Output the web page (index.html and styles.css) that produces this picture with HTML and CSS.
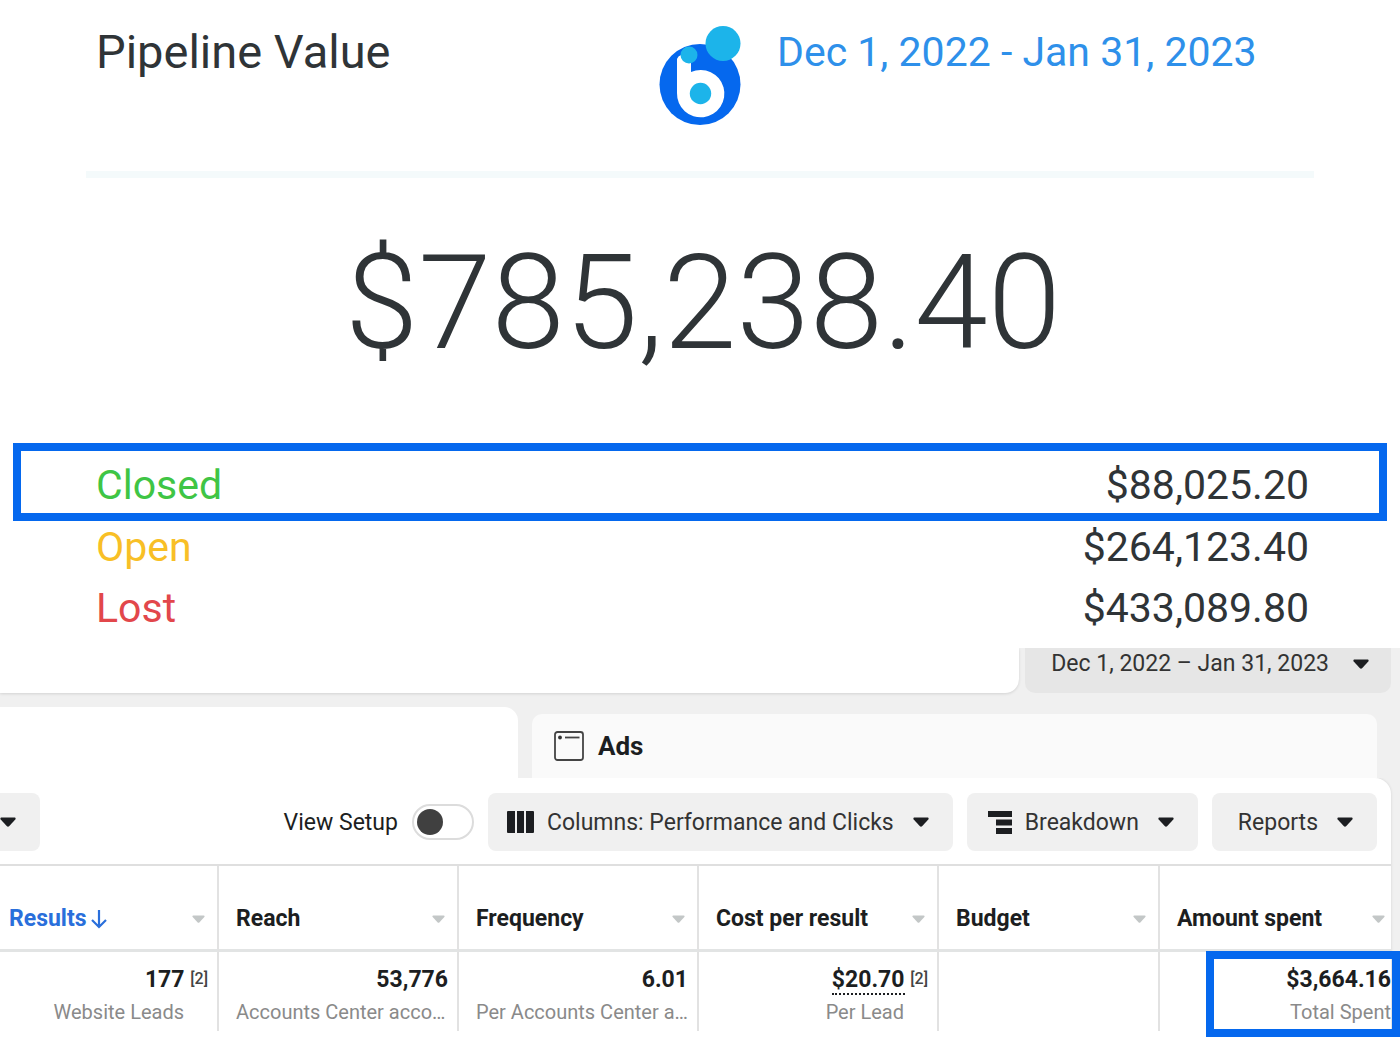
FILE: index.html
```html
<!DOCTYPE html>
<html lang="en">
<head>
    <meta charset="UTF-8">
    <meta name="viewport" content="width=device-width, initial-scale=1.0">
    <title>Pipeline Value</title>
    <link rel="stylesheet" href="styles.css">
</head>
<body>

<!-- Shared caret shape -->
<svg class="sprite" aria-hidden="true">
    <symbol id="caret" viewBox="0 0 16 10">
        <path d="M1.6 0.5h12.8c1.2 0 1.6 1.1 0.9 1.9L9.3 9a1.8 1.8 0 0 1-2.6 0L0.7 2.4C0 1.6 0.4 0.5 1.6 0.5z" fill="currentColor"/>
    </symbol>
</svg>

<section class="pipeline">
    <header class="pipeline-header">
        <h1>Pipeline Value</h1>
        <svg class="logo" viewBox="0 0 82 99" role="img" aria-label="Logo">
            <circle cx="41" cy="58.5" r="40.5" fill="#0568ee"/>
            <circle cx="64" cy="17.5" r="17.5" fill="#1cb4ea"/>
            <path d="M18 33q1-3 4-4h10v17a23.7 23.7 0 1 1-14 21z" fill="#fff"/>
            <circle cx="30" cy="29" r="8.5" fill="#1cb4ea"/>
            <circle cx="41.5" cy="67.5" r="10.7" fill="#1cb4ea"/>
        </svg>
        <a href="#" class="pipeline-date">Dec 1, 2022 - Jan 31, 2023</a>
    </header>

    <p class="total">$785,238.40</p>

    <dl class="breakdown">
        <div class="row closed"><dt>Closed</dt><dd>$88,025.20</dd></div>
        <div class="row open"><dt>Open</dt><dd>$264,123.40</dd></div>
        <div class="row lost"><dt>Lost</dt><dd>$433,089.80</dd></div>
    </dl>
</section>

<section class="ads-manager">
    <div class="topbar">
        <div class="topbar-search"></div>
        <button type="button" class="date-btn">Dec 1, 2022 – Jan 31, 2023 <svg class="caret"><use href="#caret"/></svg></button>
    </div>

    <div class="tabs">
        <div class="tab active"></div>
        <button type="button" class="tab tab-ads">
            <svg class="tab-icon" viewBox="0 0 30 30">
                <rect x="1" y="1" width="28" height="28" rx="2.5" fill="none" stroke="#444" stroke-width="1.8"/>
                <circle cx="6" cy="6.5" r="1.9" fill="#333"/>
                <path d="M11 6.5h14.5" stroke="#444" stroke-width="1.8"/>
            </svg>
            Ads
        </button>
    </div>

    <div class="panel">
        <div class="toolbar">
            <button type="button" class="btn btn-cut" aria-label="More"><svg class="caret"><use href="#caret"/></svg></button>
            <label class="setup" for="viewSetup">View Setup</label>
            <input type="checkbox" class="switch" id="viewSetup">
            <button type="button" class="btn">
                <svg class="icon-columns" viewBox="0 0 27 22">
                    <path d="M0 1q0-1 1-1h7v22H1q-1 0-1-1zM10 0h7v22h-7zM19 0h7q1 0 1 1v20q0 1-1 1h-7z" fill="#1c1e21"/>
                </svg>
                Columns: Performance and Clicks
                <svg class="caret"><use href="#caret"/></svg>
            </button>
            <button type="button" class="btn btn-breakdown">
                <svg class="icon-breakdown" viewBox="0 0 24 23">
                    <path d="M0 0h24v6H0zM8 8.5h16v6H8zM8 17h16v6H8z" fill="#1c1e21"/>
                </svg>
                Breakdown
                <svg class="caret"><use href="#caret"/></svg>
            </button>
            <button type="button" class="btn btn-reports">
                Reports
                <svg class="caret"><use href="#caret"/></svg>
            </button>
        </div>

        <table>
            <colgroup>
                <col class="col-results">
                <col class="col-wide">
                <col class="col-wide">
                <col class="col-wide">
                <col class="col-budget">
                <col class="col-amount">
            </colgroup>
            <thead>
                <tr>
                    <th class="sorted"><div class="th-inner">Results
                        <svg class="sort" viewBox="0 0 16 20"><path d="M8 1v17M1 11l7 7 7-7" fill="none" stroke="currentColor" stroke-width="2.2"/></svg>
                        <svg class="caret"><use href="#caret"/></svg></div></th>
                    <th><div class="th-inner">Reach <svg class="caret"><use href="#caret"/></svg></div></th>
                    <th><div class="th-inner">Frequency <svg class="caret"><use href="#caret"/></svg></div></th>
                    <th><div class="th-inner">Cost per result <svg class="caret"><use href="#caret"/></svg></div></th>
                    <th><div class="th-inner">Budget <svg class="caret"><use href="#caret"/></svg></div></th>
                    <th><div class="th-inner">Amount spent <svg class="caret"><use href="#caret"/></svg></div></th>
                </tr>
            </thead>
            <tbody>
                <tr>
                    <td class="noted"><strong>177 <sup>[2]</sup></strong><span class="sub">Website Leads</span></td>
                    <td><strong>53,776</strong><span class="sub long">Accounts Center acco…</span></td>
                    <td><strong>6.01</strong><span class="sub long">Per Accounts Center a…</span></td>
                    <td class="noted"><strong><span class="dotted">$20.70</span> <sup>[2]</sup></strong><span class="sub">Per Lead</span></td>
                    <td></td>
                    <td class="spent"><strong>$3,664.16</strong><span class="sub">Total Spent</span></td>
                </tr>
            </tbody>
        </table>
    </div>
</section>

</body>
</html>
```
FILE: styles.css
```css
/* Global styles */
* {
    margin: 0;
    padding: 0;
    box-sizing: border-box;
}

body {
    background: #fff;
    font-family: Roboto, 'Liberation Sans', sans-serif;
    color: #2f3437;
    overflow-x: hidden;
}

button {
    border: none;
    font-family: inherit;
    cursor: pointer;
}

.sprite {
    display: none;
}

.caret {
    width: 16px;
    height: 10px;
    color: #1c1e21;
    flex-shrink: 0;
}

/* Pipeline */
.pipeline-header {
    display: grid;
    grid-template-columns: 1fr auto 1fr;
    margin: 0 86px;
    padding: 26px 0 46px;
    border-bottom: 7px solid #f4fafb;
    line-height: 52px;
}

.pipeline-header h1 {
    padding-left: 10px;
    font-size: 47px;
    font-weight: 400;
}

.logo {
    width: 82px;
    height: 99px;
}

.pipeline-date {
    padding-left: 36px;
    font-size: 41px;
    color: #2e90ea;
    text-decoration: none;
    white-space: nowrap;
}

.total {
    padding: 45px 0 60px 6px;
    font-size: 132px;
    font-weight: 300;
    line-height: 160px;
    text-align: center;
}

.breakdown {
    padding: 0 13px 14px;
    font-size: 41px;
    line-height: 52px;
}

.row {
    display: flex;
    justify-content: space-between;
    padding: 0 78px 0 83px;
}

.closed {
    padding: 8px 70px 2px 75px;
    border: 8px solid #0568ee;
}

.lost {
    margin-top: 9px;
}

.closed dt {
    color: #3fc545;
}

.open dt {
    color: #f8bf26;
}

.lost dt {
    color: #e2474b;
}

/* Ads manager */
.ads-manager {
    background: #f0f0f0;
    color: #1c1e21;
    font-size: 23px;
}

.topbar {
    display: flex;
    gap: 6px;
    padding-right: 9px;
}

.topbar-search {
    flex: 1;
    background: #fff;
    border-radius: 0 0 14px 0;
    box-shadow: 0 1px 3px rgba(0, 0, 0, 0.12);
    clip-path: inset(0 -4px -4px 0);
}

.date-btn {
    display: flex;
    align-items: center;
    gap: 24px;
    padding: 4px 22px 17px 26px;
    border-radius: 0 0 10px 10px;
    background: #e6e6e6;
    color: #333;
    font-size: 23px;
    line-height: 24px;
    white-space: nowrap;
}

.tabs {
    display: flex;
    align-items: flex-end;
    gap: 14px;
    padding-top: 14px;
}

.tab {
    height: 64px;
    border-radius: 10px 10px 0 0;
    background: #fafafa;
    color: #1c1e21;
    font-size: 26px;
    font-weight: 700;
}

.tab.active {
    width: 37%;
    height: 71px;
    border-radius: 0 14px 0 0;
    background: #fff;
}

.tab-ads {
    flex: 1;
    display: flex;
    align-items: center;
    gap: 14px;
    margin-right: 23px;
    padding: 0 22px;
}

.tab-icon {
    width: 30px;
    height: 30px;
}

.panel {
    margin-right: 9px;
    padding-bottom: 6px;
    border-radius: 0 16px 0 0;
    background: #fff;
    box-shadow: 0 0 3px rgba(0, 0, 0, 0.12);
    clip-path: inset(0 -9px 0 0);
}

.toolbar {
    display: flex;
    align-items: center;
    gap: 14px;
    padding: 15px 14px 13px 0;
}

.btn {
    display: flex;
    align-items: center;
    gap: 13px;
    height: 58px;
    padding: 0 24px 0 19px;
    border-radius: 8px;
    background: #f0f0f0;
    color: #333;
    font-size: 23px;
    white-space: nowrap;
}

.btn .caret {
    margin-left: 6px;
}

.btn-cut {
    width: 40px;
    padding: 0;
    border-radius: 0 8px 8px 0;
}

.btn-cut .caret {
    margin: 0;
}

.btn-breakdown {
    padding-left: 21px;
}

.btn-reports {
    padding-left: 26px;
}

.icon-columns {
    width: 27px;
    height: 22px;
}

.icon-breakdown {
    width: 24px;
    height: 23px;
}

.setup {
    margin-left: auto;
}

.switch {
    appearance: none;
    width: 62px;
    height: 36px;
    padding: 3px;
    border: 2px solid #dcdcdc;
    border-radius: 18px;
    background: #fff;
    cursor: pointer;
}

.switch::before {
    content: "";
    display: block;
    width: 26px;
    height: 26px;
    border-radius: 50%;
    background: #404040;
}

.switch:checked::before {
    margin-left: auto;
}

/* Results table */
table {
    width: 100%;
    table-layout: fixed;
    border-collapse: separate;
    border-spacing: 0;
    border-top: 2px solid #dfdfdf;
}

.col-results {
    width: 219px;
}

.col-wide {
    width: 240px;
}

.col-budget {
    width: 221px;
}

.col-amount {
    width: 231px;
}

th, td {
    border-right: 2px solid #e2e2e2;
}

th:last-child, td:last-child {
    border-right: none;
}

th {
    height: 86px;
    padding: 22px 12px 0 17px;
    border-bottom: 3px solid #e2e4e4;
    font-weight: 700;
    white-space: nowrap;
}

th:last-child {
    padding-right: 6px;
}

.th-inner {
    display: flex;
    align-items: center;
    line-height: 26px;
}

th .caret {
    width: 13px;
    height: 8px;
    margin-left: auto;
    color: #c3c7c7;
}

th.sorted {
    padding-left: 9px;
    color: #2a6fdb;
}

.sort {
    width: 16px;
    height: 20px;
    margin-left: 4px;
}

td {
    height: 79px;
    padding: 13px 9px 0 17px;
    text-align: right;
    vertical-align: top;
}

td strong {
    display: block;
    line-height: 30px;
}

td sup {
    font-size: 16px;
    font-weight: 500;
    line-height: 16px;
    vertical-align: 3px;
    color: #444;
}

.sub {
    display: block;
    color: #8a8a8a;
    font-size: 20px;
    line-height: 35px;
    white-space: nowrap;
}

.long {
    text-align: left;
}

.noted .sub {
    padding-right: 24px;
}

.dotted {
    border-bottom: 2px dotted #1c1e21;
}

td.spent {
    position: relative;
    padding-right: 0;
}

/* Highlight frame over the spend figure */
.spent::after {
    content: "";
    position: absolute;
    top: -1px;
    right: -9px;
    bottom: -6px;
    left: 46px;
    border: 8px solid #0568ee;
}
```
